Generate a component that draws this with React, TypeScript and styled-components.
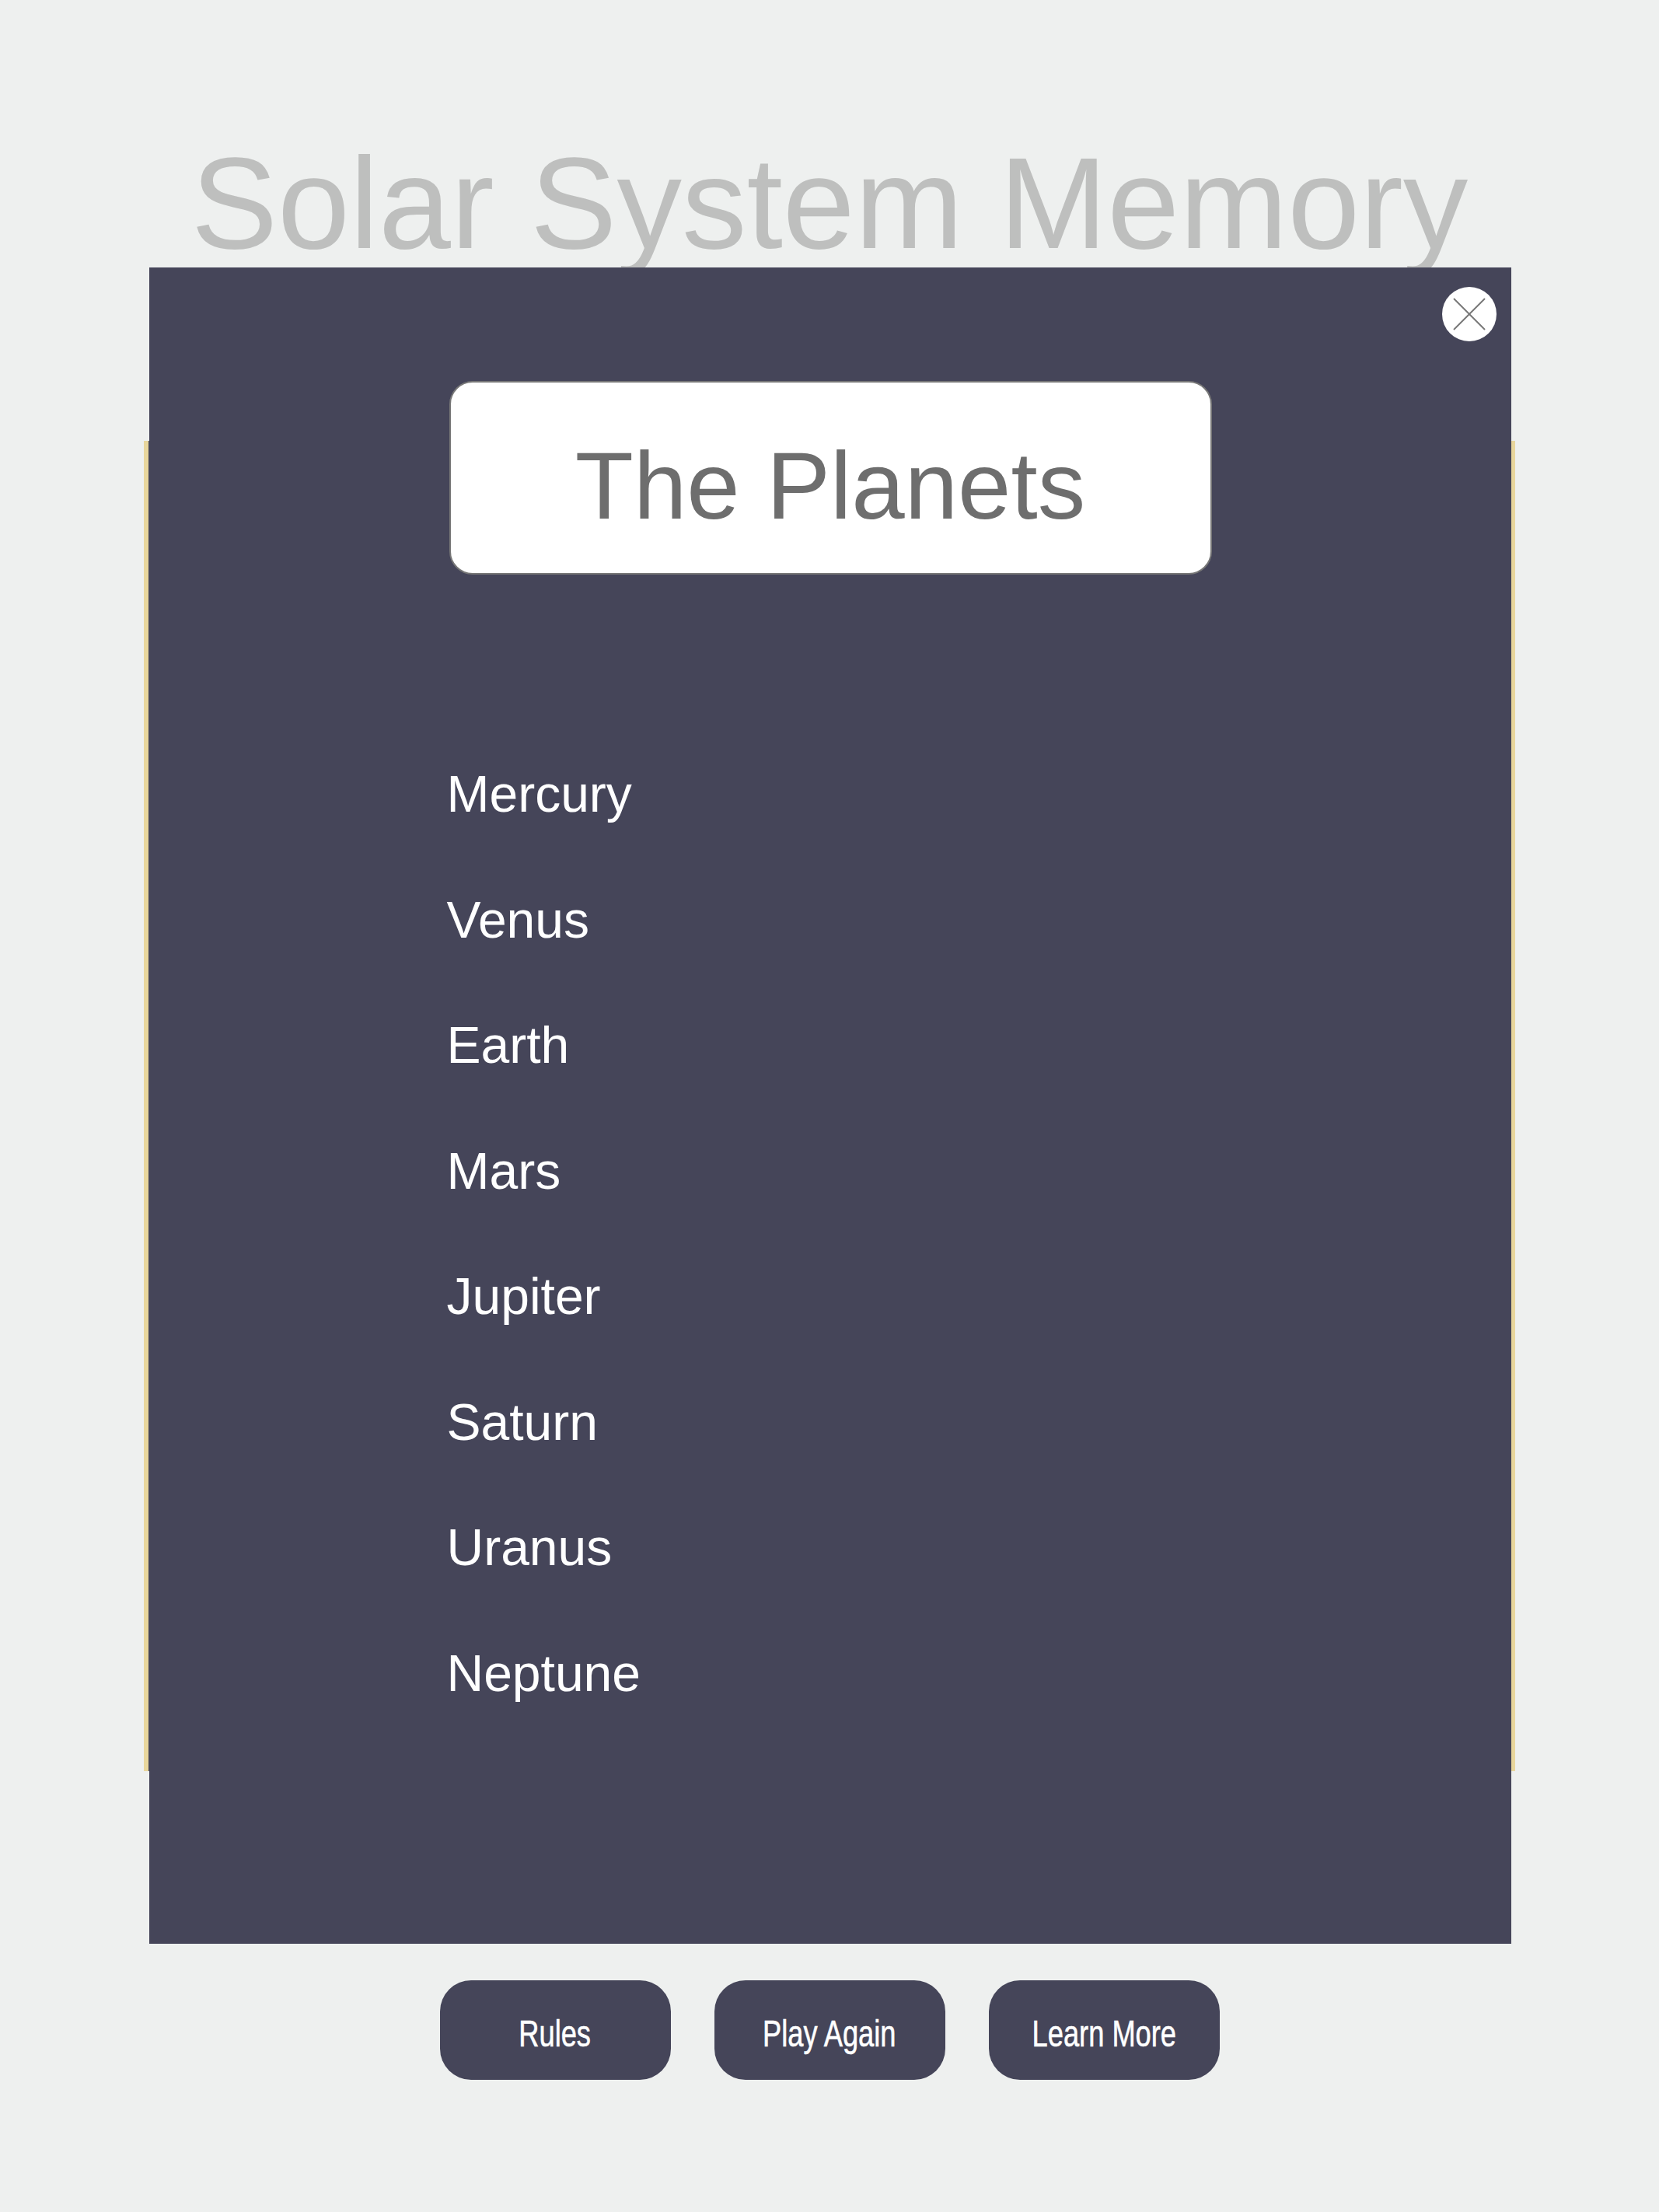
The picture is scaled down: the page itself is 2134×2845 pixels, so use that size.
import React from "react";
import styled, { createGlobalStyle } from "styled-components";

const GlobalStyle = createGlobalStyle`
  html, body {
    margin: 0;
    padding: 0;
    background: #eef0ef;
  }
  body {
    font-family: "Liberation Sans", Arial, sans-serif;
  }
`;

const Page = styled.div`
  position: relative;
  width: 2134px;
  height: 2845px;
  display: flex;
  flex-direction: column;
  align-items: center;
  padding-top: 178px;
  box-sizing: border-box;
  background: #eef0ef;
`;

const Title = styled.h1`
  margin: 0;
  font-family: "Liberation Sans", Arial, sans-serif;
  font-weight: 400;
  font-size: 167px;
  line-height: 1;
  color: #bebfbe;
  white-space: nowrap;
`;

const Board = styled.div`
  margin-top: 222px;
  width: 1764px;
  height: 1711px;
  box-sizing: border-box;
  border-left: 6px solid #e8d69c;
  border-right: 6px solid #e8d69c;
  background: #454559;
`;

const ButtonRow = styled.div`
  margin-top: 269px;
  display: flex;
  gap: 56px;
`;

const ActionButton = styled.button`
  width: 297px;
  height: 128px;
  border: none;
  border-radius: 40px;
  background: #454559;
  color: #ffffff;
  display: flex;
  align-items: center;
  justify-content: center;
  padding: 8px 0 0 0;
  cursor: pointer;
`;

const ButtonLabel = styled.span`
  display: inline-block;
  font-family: "Liberation Sans", Arial, sans-serif;
  font-size: 49px;
  line-height: 1;
  white-space: nowrap;
  -webkit-text-stroke: 0.6px #ffffff;
  transform: scaleX(0.74);
`;

const Modal = styled.div`
  position: absolute;
  top: 344px;
  left: 192px;
  width: 1752px;
  height: 2156px;
  background: #454559;
  display: flex;
  flex-direction: column;
  align-items: center;
  padding-top: 146px;
  box-sizing: border-box;
`;

const CloseButton = styled.button`
  position: absolute;
  top: 25px;
  right: 19px;
  width: 70px;
  height: 70px;
  border-radius: 50%;
  border: none;
  background: #ffffff;
  padding: 0;
  display: flex;
  align-items: center;
  justify-content: center;
  cursor: pointer;
`;

const Column = styled.div`
  width: 981px;
  display: flex;
  flex-direction: column;
`;

const Heading = styled.div`
  height: 249px;
  box-sizing: border-box;
  border: 2px solid #777777;
  border-radius: 30px;
  background: #ffffff;
  display: flex;
  align-items: center;
  justify-content: center;
  padding-top: 20px;
  font-family: "Liberation Sans", Arial, sans-serif;
  font-size: 123px;
  line-height: 1;
  color: #6e6e6e;
`;

const PlanetList = styled.ul`
  list-style: none;
  margin: 202px 0 0 -3px;
  padding: 0;
`;

const Planet = styled.li`
  font-family: "Liberation Sans", Arial, sans-serif;
  font-size: 66px;
  line-height: 161.5px;
  color: #ffffff;
`;

const planets = [
  "Mercury",
  "Venus",
  "Earth",
  "Mars",
  "Jupiter",
  "Saturn",
  "Uranus",
  "Neptune",
];

const actions = ["Rules", "Play Again", "Learn More"];

export default function App() {
  return (
    <>
      <GlobalStyle />
      <Page>
        <Title>Solar System Memory</Title>
        <Board />
        <ButtonRow>
          {actions.map((a) => (
            <ActionButton key={a}>
              <ButtonLabel>{a}</ButtonLabel>
            </ActionButton>
          ))}
        </ButtonRow>
        <Modal>
          <CloseButton aria-label="Close">
            <svg width="44" height="44" viewBox="0 0 44 44">
              <line x1="2" y1="2" x2="42" y2="42" stroke="#777" strokeWidth="2" />
              <line x1="42" y1="2" x2="2" y2="42" stroke="#777" strokeWidth="2" />
            </svg>
          </CloseButton>
          <Column>
            <Heading>The Planets</Heading>
            <PlanetList>
              {planets.map((p) => (
                <Planet key={p}>{p}</Planet>
              ))}
            </PlanetList>
          </Column>
        </Modal>
      </Page>
    </>
  );
}
